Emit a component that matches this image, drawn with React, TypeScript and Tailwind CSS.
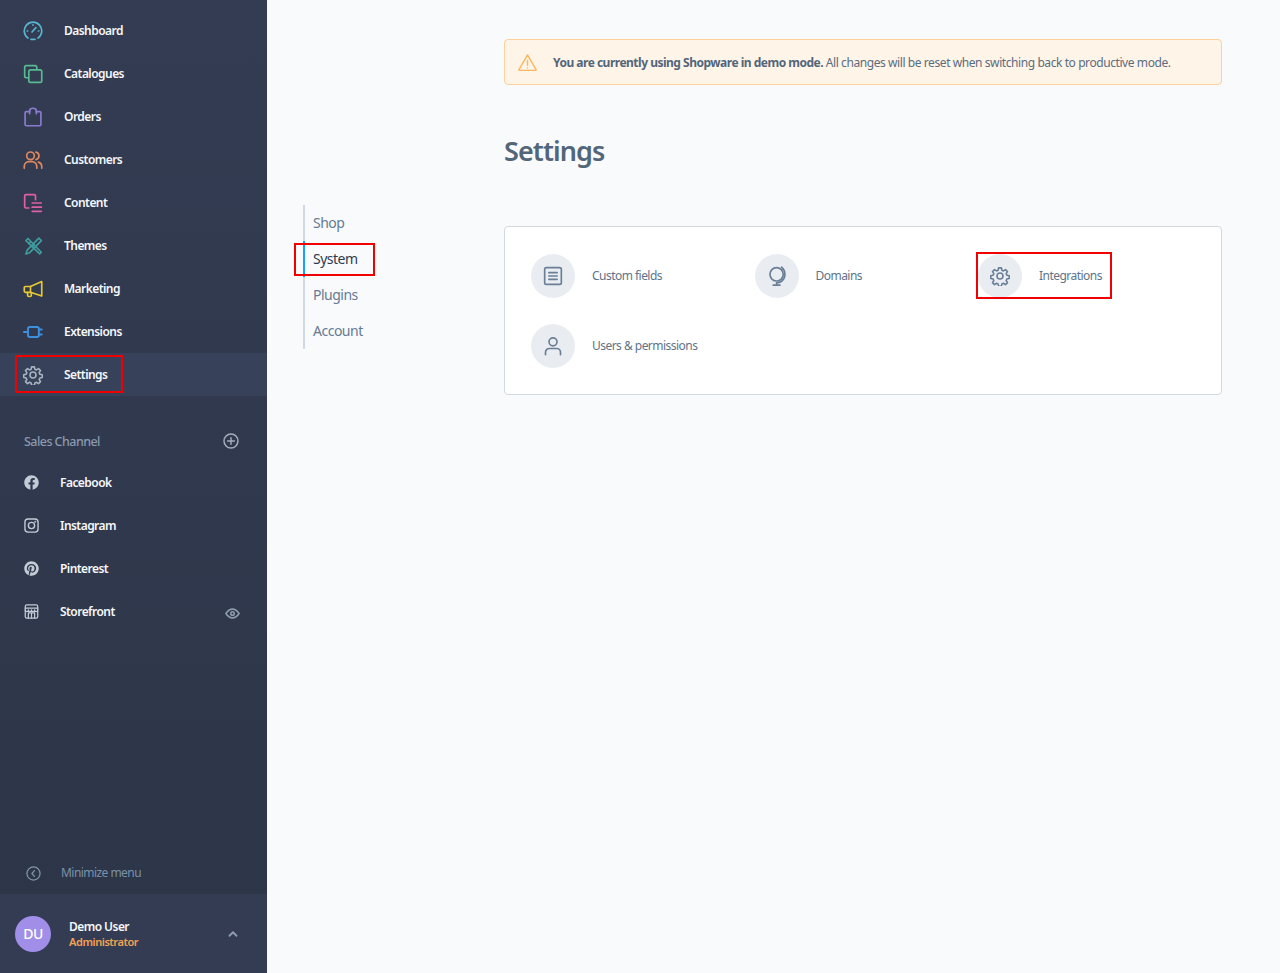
import React from "react";
import { FaFacebook, FaPinterest } from "react-icons/fa";

type P = { className?: string };
const S = ({ children, className = "", w = 2 }: { children: React.ReactNode; className?: string; w?: number }) => (
  <svg viewBox="0 0 24 24" fill="none" stroke="currentColor" strokeWidth={w} strokeLinecap="round" strokeLinejoin="round" className={className}>
    {children}
  </svg>
);

const Gauge = ({ className }: P) => (
  <S className={className}>
    <path d="M6 20.500A10.500 10.500 0 1 1 18 20.500" />
    <path d="M9.500 22h5" />
    <path d="M10.800 13.200 15.500 8" />
    <path d="M12 4.500v.6M5 12h.6M18.400 12h.6" />
  </S>
);
const Catalog = ({ className }: P) => (
  <S className={className}>
    <path d="M6 16.500H4a2 2 0 0 1-2-2V4a2 2 0 0 1 2-2h10.500a2 2 0 0 1 2 2v2" />
    <rect x="7" y="7" width="15.500" height="15" rx="2" />
  </S>
);
const Bag = ({ className }: P) => (
  <S className={className}>
    <path d="M8 5.500H4A1.500 1.500 0 0 0 2.500 7v14A1.500 1.500 0 0 0 4 22.500h16a1.500 1.500 0 0 0 1.500-1.500V7A1.500 1.500 0 0 0 20 5.500h-4" />
    <path d="M8 8V4.500a4 3 0 0 1 8 0V8" />
  </S>
);
const Users = ({ className }: P) => (
  <S className={className}>
    <circle cx="9" cy="7" r="4.600" />
    <path d="M1.500 22v-2.500A5.500 5.500 0 0 1 7 14h4a5.500 5.500 0 0 1 5.500 5.500V22" />
    <path d="M15.500 2.500a4.600 4.600 0 0 1 0 9M18.500 14.500a5.500 5.500 0 0 1 4 5V22" />
  </S>
);
const ContentIcon = ({ className }: P) => (
  <S className={className}>
    <path d="M7 18H3.500A1.500 1.500 0 0 1 2 16.500V3.500A1.500 1.500 0 0 1 3.500 2h10A1.500 1.500 0 0 1 15 3.500V8" />
    <path d="M11 12h11M11 17h11M11 22h11" />
  </S>
);
const Themes = ({ className }: P) => (
  <S className={className}>
    <path d="M19 2.500 22 5.500 8 20l-4.500 1.500L5 17z" />
    <path d="M6 3 3.500 5.500 20 21.500 22 19.500z" />
    <path d="M9 7 7 9M13 11l-2 2" />
  </S>
);
const Megaphone = ({ className }: P) => (
  <S className={className}>
    <path d="M22.500 3v17.500L9 16H3a1.500 1.500 0 0 1-1.500-1.500v-4A1.500 1.500 0 0 1 3 9h6z" />
    <path d="M9 9v7M5.500 16v3.500A1.500 1.500 0 0 0 7 21h1.500a1.500 1.500 0 0 0 1.500-1.500V17" />
  </S>
);
const Plug = ({ className }: P) => (
  <S className={className} w={2.3}>
    <path d="M1 12h5" />
    <path d="M8 6h9a2 2 0 0 1 2 2v8a2 2 0 0 1-2 2H8a2 2 0 0 1-2-2V8a2 2 0 0 1 2-2z" />
    <path d="M19 9h3.500M19 15h3.500" />
  </S>
);
const GEAR = "M10.300 2.200h3.400l.6 2.900 1.800.8 2.500-1.600 2.400 2.400-1.600 2.500.8 1.800 2.900.6v3.400l-2.900.6-.8 1.800 1.600 2.500-2.400 2.400-2.500-1.600-1.800.8-.6 2.900h-3.400l-.6-2.900-1.800-.8-2.500 1.600-2.400-2.400 1.600-2.500-.8-1.800-2.900-.6v-3.400l2.900-.6.8-1.800-1.600-2.500 2.400-2.400 2.500 1.600 1.800-.8z";
const Gear = ({ className }: P) => (
  <S className={className} w={1.9}>
    <path d={GEAR} />
    <circle cx="12" cy="12" r="3.600" />
  </S>
);
const Instagram = ({ className }: P) => (
  <S className={className} w={2.2}>
    <rect x="1.500" y="1.500" width="21" height="21" rx="5" />
    <circle cx="12" cy="12" r="5" />
    <circle cx="18" cy="6" r=".5" />
  </S>
);
const Store = ({ className }: P) => (
  <S className={className} w={2}>
    <rect x="2" y="1.500" width="20" height="21" rx="2.500" />
    <path d="M2 6.500h20M2 9.500a2.500 2.500 0 0 0 5 0 2.500 2.500 0 0 0 5 0 2.500 2.500 0 0 0 5 0 2.500 2.500 0 0 0 5 0" />
    <path d="M7 22.500V14h10v8.500M12 14v8.500" />
  </S>
);
const PlusCircle = ({ className }: P) => (
  <S className={className} w={2.2}>
    <circle cx="12" cy="12" r="10.500" />
    <path d="M12 7v10M7 12h10" />
  </S>
);
const Eye = ({ className }: P) => (
  <S className={className} w={2.6}>
    <path d="M1.500 12C5 6.500 8.500 5 12 5s7 1.500 10.500 7c-3.500 5.500-7 7-10.500 7s-7-1.500-10.500-7z" />
    <circle cx="12" cy="12" r="2.800" />
  </S>
);
const BackCircle = ({ className }: P) => (
  <S className={className} w={2}>
    <circle cx="12" cy="12" r="10.500" />
    <path d="M13.500 7.500 9.500 12l4 4.500" />
  </S>
);
const ChevUp = ({ className }: P) => (
  <S className={className} w={3.2}>
    <path d="m6 15 6-6 6 6" />
  </S>
);
const Warning = ({ className }: P) => (
  <S className={className} w={1.8}>
    <path d="M12 2.500 22.800 21a.6.6 0 0 1-.5.9H1.700a.6.6 0 0 1-.5-.9z" />
    <path d="M12 9.500v6M12 18.500v.2" />
  </S>
);
const ListBox = ({ className }: P) => (
  <S className={className}>
    <rect x="2" y="2" width="20" height="20" rx="2" />
    <path d="M7 8h10M7 12h10M7 16h10" />
  </S>
);
const Globe = ({ className }: P) => (
  <S className={className}>
    <circle cx="11.500" cy="10" r="8" />
    <path d="M17.500 1.500a11 11 0 0 1 .5 16.500 10.500 10.500 0 0 1-6.500 2.200M11.500 20.200V23M7.500 23h8" />
  </S>
);
const User = ({ className }: P) => (
  <S className={className}>
    <circle cx="12" cy="7" r="4.800" />
    <path d="M3 22.500v-3A4.500 4.500 0 0 1 7.500 15h9a4.500 4.500 0 0 1 4.500 4.500v3" />
  </S>
);

const main = [
  { label: "Dashboard", Icon: Gauge, color: "text-[#57b5cf]" },
  { label: "Catalogues", Icon: Catalog, color: "text-[#57bb93]" },
  { label: "Orders", Icon: Bag, color: "text-[#8b7bd0]" },
  { label: "Customers", Icon: Users, color: "text-[#e0875f]" },
  { label: "Content", Icon: ContentIcon, color: "text-[#e05fa5]" },
  { label: "Themes", Icon: Themes, color: "text-[#3f9c9c]" },
  { label: "Marketing", Icon: Megaphone, color: "text-[#e8c92f]" },
  { label: "Extensions", Icon: Plug, color: "text-[#3d8fe0]" },
];

const sales = [
  { label: "Facebook", Icon: FaFacebook },
  { label: "Instagram", Icon: Instagram },
  { label: "Pinterest", Icon: FaPinterest },
];

const settings = [
  { label: "Custom fields", Icon: ListBox },
  { label: "Domains", Icon: Globe },
  { label: "Integrations", Icon: Gear },
  { label: "Users & permissions", Icon: User },
];

const font = "font-['Noto_Sans',sans-serif]";

export default function App() {
  return (
    <div className={`flex h-[973px] w-full overflow-hidden bg-[#f9fafc] ${font}`}>
      <aside className="flex h-full w-[267px] shrink-0 flex-col bg-gradient-to-b from-[#333c52] to-[#2d3548] pt-[9px]">
        {main.map(({ label, Icon, color }) => (
          <div key={label} className="flex h-[43px] items-center pl-[23px]">
            <Icon className={`h-[20px] w-[20px] ${color}`} />
            <span className="ml-[21px] text-[12px] font-semibold tracking-[-0.55px] text-[#f5f7fb]">{label}</span>
          </div>
        ))}
        <div className="relative flex h-[43px] items-center bg-[#374159] pl-[23px]">
          <Gear className="h-[20px] w-[20px] text-[#a8b3c2]" />
          <span className="ml-[21px] text-[12px] font-semibold tracking-[-0.55px] text-[#f5f7fb]">Settings</span>
          <div className="absolute left-[15px] top-[2px] h-[38px] w-[108px] border-2 border-[#f00000]" />
        </div>
        <div className="mt-[34px] mb-[9px] flex h-[22px] items-center justify-between pl-[24px] pr-[28px]">
          <span className="pt-[2px] text-[12.500px] font-medium tracking-[-0.55px] text-[#8a9bb0]">Sales Channel</span>
          <PlusCircle className="h-[16px] w-[16px] text-[#a3afbf]" />
        </div>
        {sales.map(({ label, Icon }) => (
          <div key={label} className="flex h-[43px] items-center pl-[24px]">
            <Icon className="h-[15px] w-[15px] text-[#c3cbd6]" />
            <span className="ml-[21px] text-[12px] font-semibold tracking-[-0.55px] text-[#f5f7fb]">{label}</span>
          </div>
        ))}
        <div className="flex h-[43px] items-center pl-[24px] pr-[27px]">
          <Store className="h-[15px] w-[15px] text-[#c3cbd6]" />
          <span className="ml-[21px] text-[12px] font-semibold tracking-[-0.55px] text-[#f5f7fb]">Storefront</span>
          <Eye className="ml-auto mt-[3px] h-[15px] w-[15px] text-[#8d9bad]" />
        </div>
        <div className="mt-auto flex h-[42px] items-center pl-[26px]">
          <BackCircle className="h-[15px] w-[15px] text-[#8496a8]" />
          <span className="ml-[20px] text-[12px] tracking-[-0.55px] text-[#7a92ab]">Minimize menu</span>
        </div>
        <div className="flex h-[79px] items-center bg-[#343c54] pl-[15px] pr-[27px]">
          <div className="flex h-[36px] w-[36px] items-center justify-center rounded-full bg-[#a08ee8] text-[14px] font-medium tracking-[-0.5px] text-white">
            DU
          </div>
          <div className="ml-[18px] flex flex-col">
            <span className="text-[12px] leading-[15px] font-semibold tracking-[-0.55px] text-[#f5f7fb]">Demo User</span>
            <span className="text-[11px] leading-[15px] font-semibold tracking-[-0.45px] text-[#f0a352]">Administrator</span>
          </div>
          <ChevUp className="ml-auto h-[14px] w-[14px] text-[#8d9bad]" />
        </div>
      </aside>

      <nav className="ml-[36px] mt-[205px] h-[144px] w-[201px] shrink-0">
        <div className="flex h-full flex-col border-l-2 border-[#d1d9e4]">
          <div className="flex h-[36px] items-center pb-[2px] pl-[8px] text-[14px] tracking-[-0.5px] text-[#657b94]">Shop</div>
          <div className="relative -ml-[2px] flex h-[36px] items-center border-l-2 border-[#189eff] pb-[2px] pl-[8px] text-[14px] tracking-[-0.5px] text-[#2f3a4d]">
            System
            <div className="absolute -left-[11px] top-[2px] h-[33px] w-[81px] border-2 border-[#f00000]" />
          </div>
          <div className="flex h-[36px] items-center pb-[2px] pl-[8px] text-[14px] tracking-[-0.5px] text-[#657b94]">Plugins</div>
          <div className="flex h-[36px] items-center pb-[2px] pl-[8px] text-[14px] tracking-[-0.5px] text-[#657b94]">Account</div>
        </div>
      </nav>

      <main className="w-[718px] shrink-0 pt-[39px]">
        <div className="flex h-[46px] items-center rounded-[4px] border-[1.500px] border-[#ffd099] bg-[#fff4e8] pl-[13px]">
          <Warning className="h-[19px] w-[19px] text-[#ffb75d]" />
          <p className="ml-[16px] pt-[2px] text-[12px] tracking-[-0.42px] text-[#5a6c80]">
            <span className="font-bold tracking-[-0.5px] text-[#52667a]">You are currently using Shopware in demo mode.</span> All changes will be reset when switching back to productive mode.
          </p>
        </div>
        <h1 className="mt-[43px] text-[27px] leading-[46px] font-semibold tracking-[-0.9px] text-[#52667a]">Settings</h1>
        <div className="mt-[52px] grid h-[169px] grid-cols-[223.500px_223.500px_1fr] content-start gap-y-[26px] rounded-[4px] border border-[#d1d9e0] bg-white pl-[26px] pt-[27px]">
          {settings.map(({ label, Icon }) => (
            <div key={label} className="relative flex h-[44px] items-center">
              <div className="flex h-[44px] w-[44px] items-center justify-center rounded-full bg-[#e9edf2]">
                <Icon className="h-[20px] w-[20px] text-[#6a7f96]" />
              </div>
              <span className="ml-[17px] text-[12px] tracking-[-0.53px] text-[#607389]">{label}</span>
              {label === "Integrations" && (
                <div className="absolute -left-[2px] -top-[2px] h-[47px] w-[136px] border-2 border-[#f00000]" />
              )}
            </div>
          ))}
        </div>
      </main>
    </div>
  );
}
